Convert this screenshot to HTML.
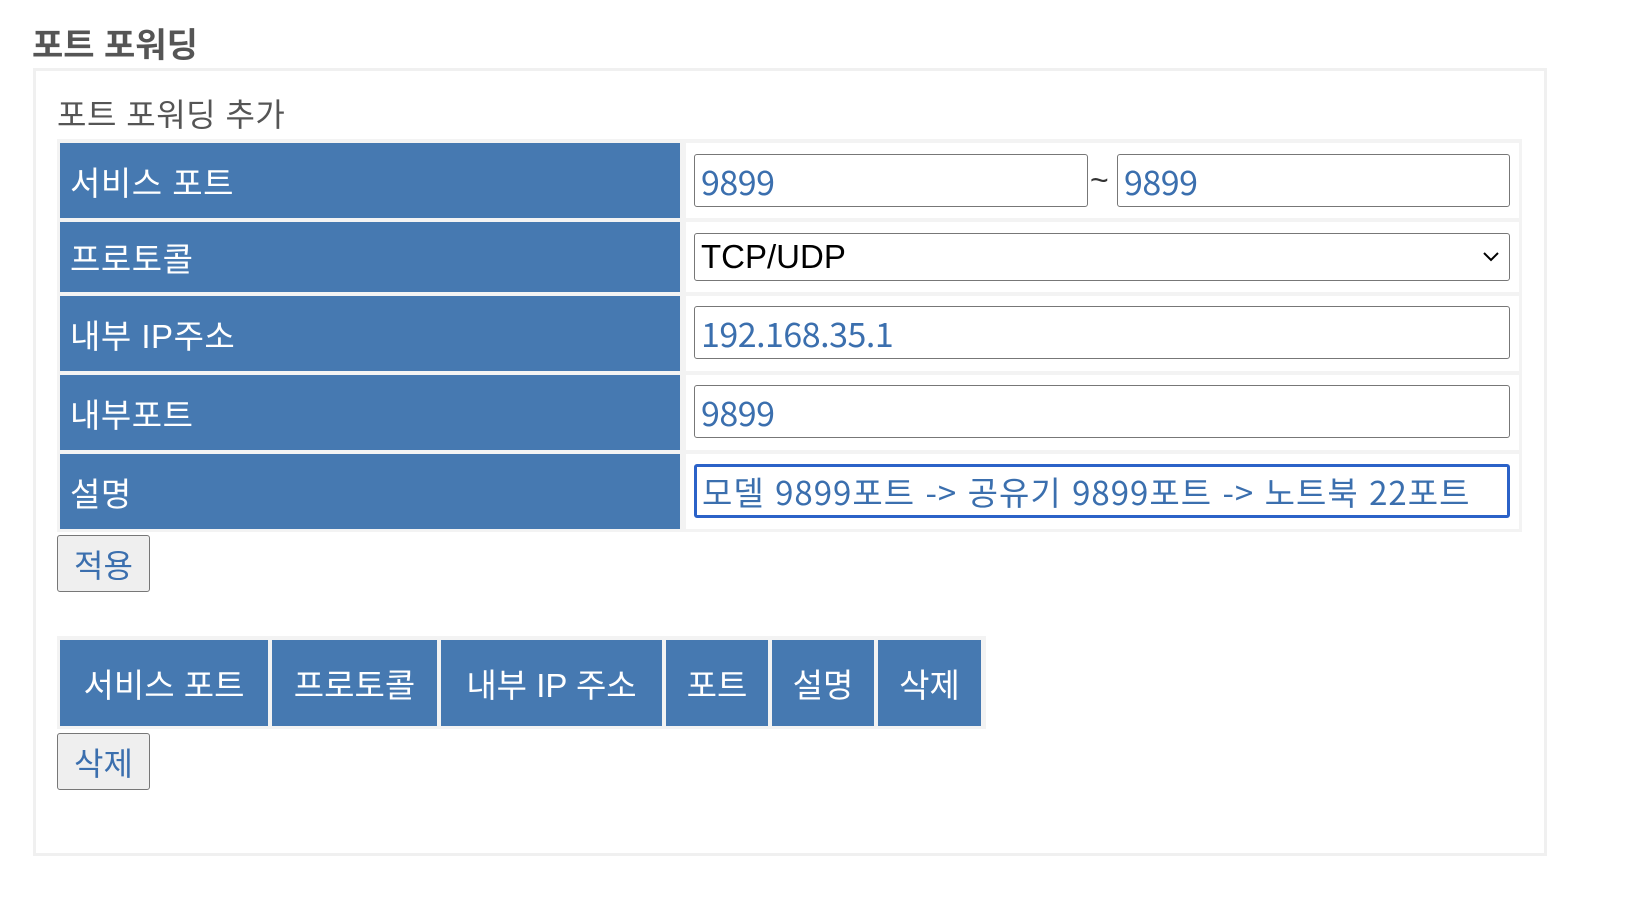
<!DOCTYPE html>
<html><head><meta charset="utf-8"><style>
body{margin:0;width:1642px;height:900px;background:#fff;font-family:"Liberation Sans","Noto Sans CJK KR",sans-serif;position:relative;overflow:hidden}
.a{position:absolute;box-sizing:border-box}
.lab{background:#4679b1;color:#fff;font-size:33px;padding-left:10px;display:flex;align-items:center;letter-spacing:0.5px}
.inp{background:#fff;border:1px solid #777;border-radius:3px;color:#3b6fae;font-size:34px;display:flex;align-items:center;padding-left:6px;font-family:"Noto Sans CJK KR",sans-serif;letter-spacing:-0.5px}
.btn{background:#efefef;border:1.5px solid #777;border-radius:3px;color:#3b6fae;font-size:32px;display:flex;align-items:center;justify-content:center}
.th{background:#4679b1;color:#fff;font-size:33px;display:flex;align-items:center;justify-content:center}
</style></head><body>
<div class="a" style="left:32px;top:18px;font-size:34px;font-weight:bold;color:#555">포트 포워딩</div>
<div class="a" style="left:33px;top:68px;width:1514px;height:788px;border:3px solid #f0f0f0"></div>
<div class="a" style="left:57px;top:90px;font-size:32px;color:#555;letter-spacing:0.5px">포트 포워딩 추가</div>
<div class="a" style="left:57px;top:139px;width:1465px;height:393px;background:#f3f3f3"></div>
<div class="a" style="left:686px;top:143px;width:833px;height:386px;background:#fff"></div>
<div class="a lab" style="left:60px;top:143px;width:620px;height:75px">서비스 포트</div>
<div class="a lab" style="left:60px;top:222px;width:620px;height:70px">프로토콜</div>
<div class="a lab" style="left:60px;top:296px;width:620px;height:75px">내부 IP주소</div>
<div class="a lab" style="left:60px;top:375px;width:620px;height:75px">내부포트</div>
<div class="a lab" style="left:60px;top:454px;width:620px;height:75px">설명</div>
<div class="a" style="left:686px;top:218px;width:833px;height:4px;background:#f3f3f3"></div>
<div class="a" style="left:686px;top:292px;width:833px;height:4px;background:#f3f3f3"></div>
<div class="a" style="left:686px;top:371px;width:833px;height:4px;background:#f3f3f3"></div>
<div class="a" style="left:686px;top:450px;width:833px;height:4px;background:#f3f3f3"></div>
<div class="a inp" style="left:694px;top:154px;width:394px;height:53px">9899</div>
<div class="a" style="left:1090px;top:162px;font-size:32px;color:#333">~</div>
<div class="a inp" style="left:1117px;top:154px;width:393px;height:53px">9899</div>
<div class="a inp" style="left:694px;top:233px;width:816px;height:48px;color:#000;font-family:'Liberation Sans',sans-serif;font-size:33px;letter-spacing:0">TCP/UDP<svg style="position:absolute;right:10px;top:18px" width="16" height="10"><path d="M1 1L8 8L15 1" stroke="#000" stroke-width="2" fill="none"/></svg></div>
<div class="a inp" style="left:694px;top:306px;width:816px;height:53px">192.168.35.1</div>
<div class="a inp" style="left:694px;top:385px;width:816px;height:53px">9899</div>
<div class="a inp" style="left:694px;top:464px;width:816px;height:54px;border:3px solid #2b62c8;padding-left:5px;font-size:33px;letter-spacing:1px;word-spacing:2px;white-space:nowrap;overflow:hidden">모델 9899포트 -&gt; 공유기 9899포트 -&gt; 노트북 22포트</div>
<div class="a btn" style="left:57px;top:535px;width:93px;height:57px">적용</div>
<div class="a" style="left:57px;top:636px;width:929px;height:93px;background:#f3f3f3"></div>
<div class="a th" style="left:60px;top:640px;width:208px;height:86px">서비스 포트</div>
<div class="a th" style="left:272px;top:640px;width:165px;height:86px">프로토콜</div>
<div class="a th" style="left:441px;top:640px;width:221px;height:86px">내부 IP 주소</div>
<div class="a th" style="left:666px;top:640px;width:102px;height:86px">포트</div>
<div class="a th" style="left:772px;top:640px;width:102px;height:86px">설명</div>
<div class="a th" style="left:878px;top:640px;width:103px;height:86px">삭제</div>
<div class="a btn" style="left:57px;top:733px;width:93px;height:57px">삭제</div>
</body></html>
